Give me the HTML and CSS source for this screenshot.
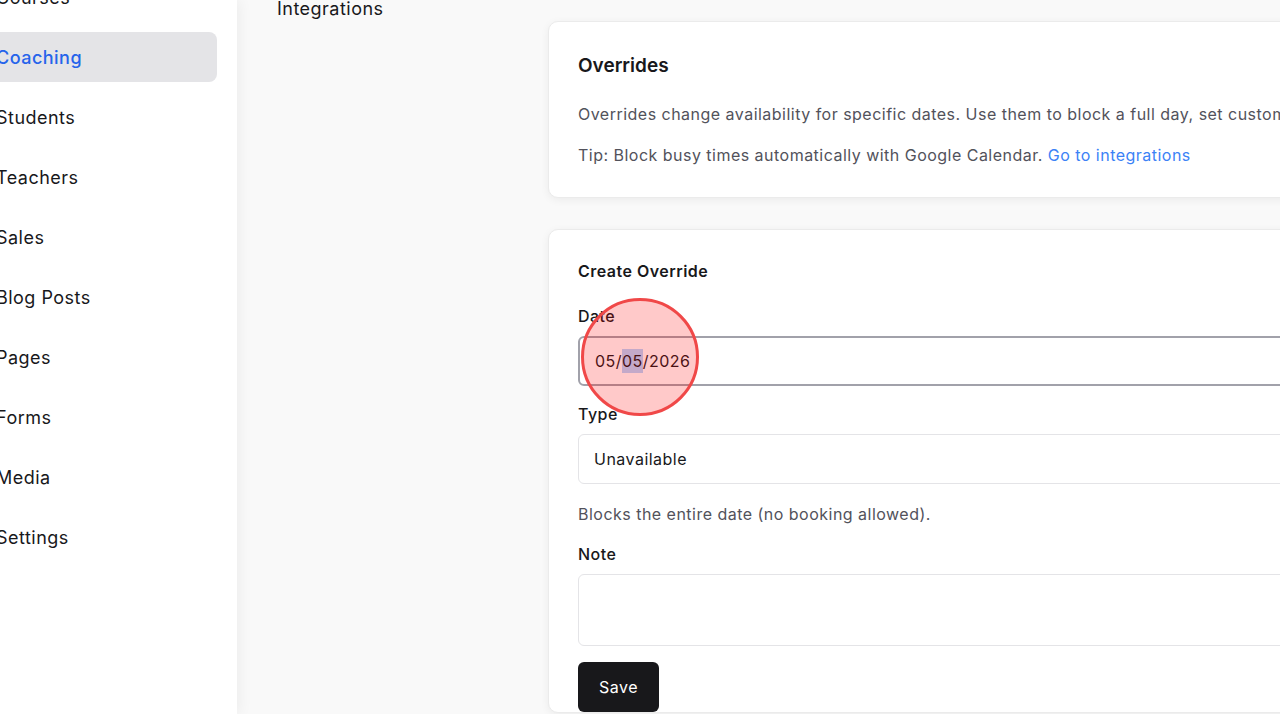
FILE: index.html
```html
<!DOCTYPE html>
<html lang="en">
<head>
    <meta charset="UTF-8">
    <meta name="viewport" content="width=device-width, initial-scale=1.0">
    <title>Coaching - Overrides</title>
    <link rel="stylesheet" href="styles.css">
</head>
<body>
    <div class="layout">
        <aside class="sidebar">
            <nav class="side-nav">
                <a class="side-link" href="#">Courses</a>
                <a class="side-link active" href="#">Coaching</a>
                <a class="side-link" href="#">Students</a>
                <a class="side-link" href="#">Teachers</a>
                <a class="side-link" href="#">Sales</a>
                <a class="side-link" href="#">Blog Posts</a>
                <a class="side-link" href="#">Pages</a>
                <a class="side-link" href="#">Forms</a>
                <a class="side-link" href="#">Media</a>
                <a class="side-link" href="#">Settings</a>
            </nav>
        </aside>

        <main class="main">
            <div class="sub-nav">
                <a class="sub-link" href="#">Integrations</a>
            </div>

            <div class="cards">
                <section class="card intro">
                    <h2>Overrides</h2>
                    <p>Overrides change availability for specific dates. Use them to block a full day, set custom hours, or add extra time.</p>
                    <p>Tip: Block busy times automatically with Google Calendar. <a href="#">Go to integrations</a></p>
                </section>

                <section class="card">
                    <h3>Create Override</h3>
                    <form class="override-form">
                        <label>Date</label>
                        <div class="field date-field">
                            <span class="date-value">05/<span class="seg-selected">05</span>/2026</span>
                            <span class="click-ring"></span>
                        </div>

                        <label>Type</label>
                        <div class="field">Unavailable</div>
                        <p class="help">Blocks the entire date (no booking allowed).</p>

                        <label>Note</label>
                        <div class="field note"></div>

                        <div>
                            <button type="button">Save</button>
                        </div>
                    </form>
                </section>
            </div>
        </main>
    </div>
</body>
</html>
```

FILE: styles.css
```css
* {
    margin: 0;
    padding: 0;
    box-sizing: border-box;
}
body {
    font-family: 'Inter', 'Noto Sans', sans-serif;
    letter-spacing: 0.03em;
    background: #f9f9f9;
    color: #18181b;
    overflow: hidden;
    height: 714px;
}
a {
    text-decoration: none;
}
.layout {
    display: flex;
    width: 1600px;
    height: 714px;
}
.sidebar {
    width: 237px;
    flex-shrink: 0;
    background: white;
    box-shadow: 2px 0 14px rgba(0, 0, 0, 0.06);
    position: relative;
    z-index: 1;
}
.side-nav {
    display: flex;
    flex-direction: column;
    gap: 10px;
    margin: -28px 20px 0 -24px;
}
.side-link {
    display: flex;
    align-items: center;
    height: 50px;
    padding: 0 20px;
    border-radius: 8px;
    font-size: 18px;
    color: #18181b;
}
.side-link.active {
    background: #e4e4e7;
    color: #2563eb;
    font-weight: 500;
}
.main {
    flex: 1;
    display: flex;
    padding-left: 40px;
}
.sub-nav {
    width: 271px;
    flex-shrink: 0;
    margin-top: -3px;
}
.sub-link {
    font-size: 18px;
    line-height: 24px;
    color: #18181b;
}
.cards {
    width: 1000px;
    padding-top: 21px;
    display: flex;
    flex-direction: column;
    gap: 31px;
}
.card {
    background: white;
    border: 1px solid #ebebeb;
    border-radius: 10px;
    box-shadow: 0 2px 8px rgba(0, 0, 0, 0.06);
    padding: 29px 29px 0;
}
.card.intro {
    padding: 32px 29px 30px;
}
.card h2 {
    font-size: 19px;
    font-weight: 600;
    line-height: 24px;
    letter-spacing: 0;
    margin-bottom: 24px;
}
.card p {
    font-size: 16px;
    line-height: 24px;
    color: #52525b;
}
.card p + p {
    margin-top: 17px;
}
.card p a {
    color: #3b82f6;
}
.card h3 {
    font-size: 16px;
    font-weight: 600;
    line-height: 24px;
    margin-bottom: 21px;
}
.override-form {
    display: flex;
    flex-direction: column;
}
.override-form label {
    font-size: 16px;
    font-weight: 500;
    line-height: 24px;
    margin-bottom: 8px;
}
.field {
    height: 50px;
    border: 1px solid #e4e4e7;
    border-radius: 6px;
    padding: 0 15px;
    display: flex;
    align-items: center;
    font-size: 16px;
    margin-bottom: 16px;
    background: white;
}
.date-field {
    border: 2px solid #a1a1aa;
    position: relative;
}
.seg-selected {
    background: #b4d7ff;
    padding: 2px 0;
}
.click-ring {
    position: absolute;
    left: 1px;
    top: -40px;
    width: 118px;
    height: 118px;
    border-radius: 50%;
    border: 3px solid #f04848;
    background: rgba(255, 0, 0, 0.21);
}
.override-form .help {
    margin-top: 2px;
    margin-bottom: 16px;
}
.field.note {
    height: 72px;
}
button {
    height: 50px;
    padding: 0 21px;
    background: #18181b;
    color: white;
    border: none;
    border-radius: 6px;
    font-family: inherit;
    font-size: 16px;
    letter-spacing: 0.03em;
    cursor: pointer;
}
```
